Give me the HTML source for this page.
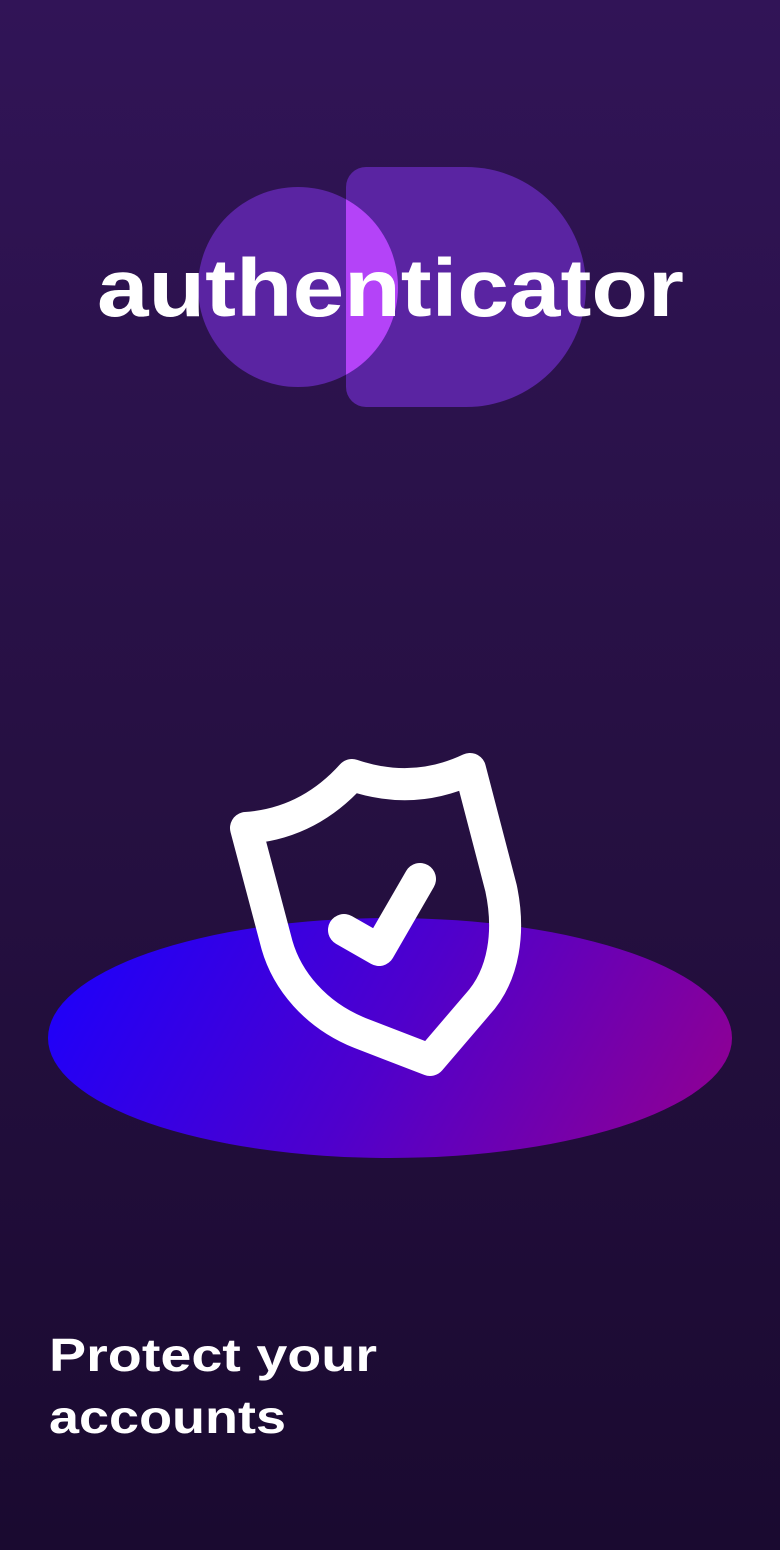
<!DOCTYPE html>
<html><head><meta charset="utf-8"><style>
html,body{margin:0;padding:0}
body{width:780px;height:1550px;overflow:hidden;background:linear-gradient(180deg,#311457 0%,#261042 50%,#1a0a30 100%)}
svg{display:block}
</style></head><body>
<svg width="780" height="1550" viewBox="0 0 780 1550" xmlns="http://www.w3.org/2000/svg">
<defs>
<linearGradient id="g" x1="0" y1="0.4" x2="1" y2="0.6">
<stop offset="0" stop-color="#2000f8"/>
<stop offset="0.5" stop-color="#4f00cc"/>
<stop offset="1" stop-color="#8c0096"/>
</linearGradient>
<clipPath id="c"><circle cx="298" cy="287" r="100"/></clipPath>
</defs>
<circle cx="298" cy="287" r="100" fill="#5a24a2"/>
<path d="M366 167 H466 A120 120 0 0 1 466 407 H366 A20 20 0 0 1 346 387 V187 A20 20 0 0 1 366 167 Z" fill="#5a24a2"/>
<path clip-path="url(#c)" d="M366 167 H466 A120 120 0 0 1 466 407 H366 A20 20 0 0 1 346 387 V187 A20 20 0 0 1 366 167 Z" fill="#b443f8"/>
<text x="97" y="316" font-family="Liberation Sans, sans-serif" font-weight="bold" font-size="82" fill="#fff" textLength="587" lengthAdjust="spacingAndGlyphs">authenticator</text>
<ellipse cx="390" cy="1038" rx="342" ry="120" fill="url(#g)"/>
<path d="M246 828 C290 825 325 805 352 775 C390 788 430 788 470 769 L501 888 C510 930 505 975 477 1005 L430 1060 L360 1033 C315 1015 287 980 277 945 Z" fill="none" stroke="#fff" stroke-width="32" stroke-linejoin="round"/>
<path d="M344 930 L379 950 L420 879" fill="none" stroke="#fff" stroke-width="32" stroke-linecap="round" stroke-linejoin="round"/>
<text x="49" y="1371" font-family="Liberation Sans, sans-serif" font-weight="bold" font-size="46" fill="#fff" textLength="328" lengthAdjust="spacingAndGlyphs">Protect your</text>
<text x="49" y="1433" font-family="Liberation Sans, sans-serif" font-weight="bold" font-size="46" fill="#fff" textLength="237" lengthAdjust="spacingAndGlyphs">accounts</text>
</svg>
</body></html>
